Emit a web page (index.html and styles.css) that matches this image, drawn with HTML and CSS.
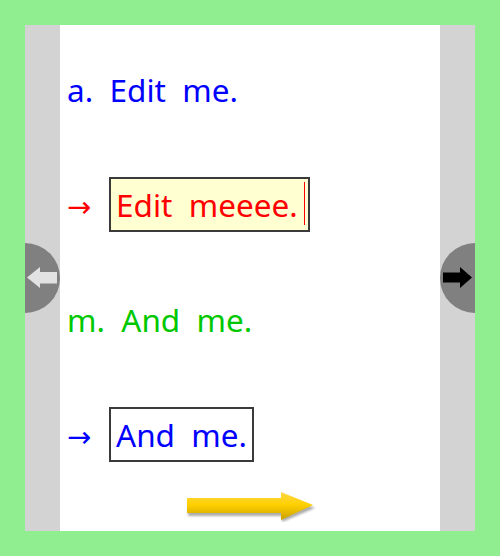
FILE: index.html
```html
<!DOCTYPE html>
<html>
<head>
<meta charset="utf-8">
<link rel="stylesheet" href="styles.css">
</head>
<body>
<div class="frame">
  <div class="side side-left">
    <div class="nav nav-left">
      <svg width="35" height="70" viewBox="0 0 35 70">
        <polygon points="2,34.5 15,24 15,29 32,29 32,40.5 15,40.5 15,45" fill="#e2e2e2"/>
      </svg>
    </div>
  </div>
  <main class="page">
    <div class="row"><p class="line blue">a.  Edit  me.</p></div>
    <div class="row"><p class="line red"><span class="mark">→</span><span class="box box-yellow">Edit  meeee.<span class="caret"></span></span></p></div>
    <div class="row"><p class="line green">m.  And  me.</p></div>
    <div class="row"><p class="line blue"><span class="mark">→</span><span class="box">And  me.</span></p></div>
    <div class="next">
      <svg width="130" height="30" viewBox="0 0 130 30">
        <defs>
          <linearGradient id="gold" x1="0" y1="0" x2="0" y2="1">
            <stop offset="0" stop-color="#ffd84a"/>
            <stop offset="0.45" stop-color="#ffd000"/>
            <stop offset="1" stop-color="#c9a000"/>
          </linearGradient>
          <filter id="blur" x="-10%" y="-30%" width="120%" height="160%">
            <feGaussianBlur stdDeviation="1.2"/>
          </filter>
        </defs>
        <polygon points="2,9 96,9 96,3 129,16 96,30 96,24 2,24" fill="#777" opacity="0.6" filter="url(#blur)"/>
        <polygon points="1,6 95,6 95,0 127,13 95,28 95,21 1,21" fill="url(#gold)"/>
      </svg>
    </div>
  </main>
  <div class="side side-right">
    <div class="nav nav-right">
      <svg width="35" height="70" viewBox="0 0 35 70">
        <polygon points="3,29.5 20,29.5 20,24 32,34.5 20,45 20,39.5 3,39.5" fill="#000"/>
      </svg>
    </div>
  </div>
</div>
</body>
</html>
```

FILE: styles.css
```css
html, body {
  margin: 0;
  padding: 0;
}

body {
  background: #90ee90;
  width: 500px;
  height: 556px;
  overflow: hidden;
  font-family: "Noto Sans", "DejaVu Sans", sans-serif;
}

.frame {
  margin: 25px;
  width: 450px;
  height: 506px;
  display: flex;
}

.side {
  width: 35px;
  background: #d3d3d3;
  display: flex;
  align-items: center;
}

.side-right {
  justify-content: flex-end;
}

.nav {
  width: 35px;
  height: 70px;
  background: #808080;
}

.nav svg {
  display: block;
}

.nav-left {
  border-radius: 0 35px 35px 0;
}

.nav-right {
  border-radius: 35px 0 0 35px;
}

.page {
  width: 380px;
  background: #fff;
  padding: 7px 0 0 7px;
  box-sizing: border-box;
  display: flex;
  flex-direction: column;
}

.row {
  height: 115px;
  display: flex;
  align-items: center;
}

.line {
  margin: 0;
  font-size: 31.5px;
  line-height: 40px;
  white-space: pre;
}

.mark {
  display: inline-block;
  width: 42px;
  font-family: "DejaVu Sans", sans-serif;
  font-size: 29px;
}

.blue { color: #0000ff; }
.red { color: #ff0000; }
.green { color: #00c800; }

.box {
  display: inline-block;
  line-height: 41px;
  padding: 5px 5px;
  border: 2px solid #3a3a3a;
  background: #fff;
}

.box-yellow {
  position: relative;
  width: 188px;
  padding-right: 4px;
  background: #ffffd2;
}

.caret {
  position: absolute;
  right: 3px;
  top: 3px;
  width: 1px;
  height: 43px;
  background: #ff0000;
}

.next {
  display: flex;
  justify-content: center;
  padding-right: 5px;
}

.next svg {
  display: block;
}
```
